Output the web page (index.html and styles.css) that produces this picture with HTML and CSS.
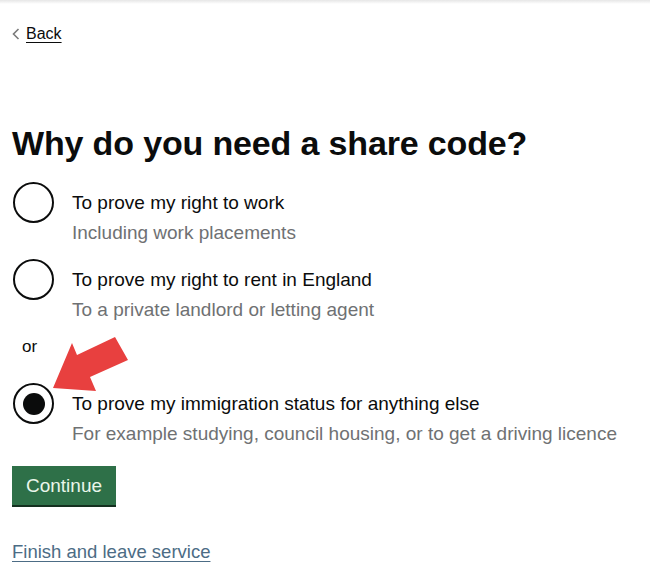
FILE: index.html
```html
<!DOCTYPE html>
<html lang="en">
<head>
<meta charset="utf-8">
<title>Why do you need a share code?</title>
<link rel="stylesheet" href="styles.css">
</head>
<body>
<div class="topline"></div>
<main class="page">
  <a class="back" href="#"><svg class="chev" width="8" height="12" viewBox="0 0 8 12"><polyline points="6.5,1 1.5,6 6.5,11" fill="none" stroke="#7a7a7a" stroke-width="1.6"/></svg><span class="back-text">Back</span></a>
  <h1 class="title">Why do you need a share code?</h1>
  <div class="radios">
    <div class="item">
      <span class="radio"></span>
      <div class="text">
        <div class="label">To prove my right to work</div>
        <div class="hint">Including work placements</div>
      </div>
    </div>
    <div class="item">
      <span class="radio"></span>
      <div class="text">
        <div class="label">To prove my right to rent in England</div>
        <div class="hint">To a private landlord or letting agent</div>
      </div>
    </div>
    <div class="or">or</div>
    <div class="item">
      <span class="radio checked"></span>
      <div class="text">
        <div class="label">To prove my immigration status for anything else</div>
        <div class="hint">For example studying, council housing, or to get a driving licence</div>
      </div>
    </div>
  </div>
  <button class="btn" type="button">Continue</button>
  <a class="finish" href="#">Finish and leave service</a>
  <svg class="arrow" width="90" height="70" viewBox="0 0 90 70">
    <polygon points="3,54 22,9 27,21 65,3 78,26 40,43 46,57" fill="#e8403f"/>
  </svg>
</main>
</body>
</html>
```
FILE: styles.css
```css
html, body {
  margin: 0;
  padding: 0;
  background: #ffffff;
}
body {
  font-family: "Liberation Sans", Arial, sans-serif;
  color: #0b0c0c;
  width: 650px;
  height: 580px;
  overflow: hidden;
}
.topline {
  height: 4px;
  background: linear-gradient(#e6e6e6, #ffffff);
}
.page {
  position: relative;
  padding: 0 0 0 12px;
  display: flex;
  flex-direction: column;
  align-items: flex-start;
}
.back {
  margin-top: 20px;
  display: flex;
  align-items: center;
  gap: 6px;
  color: #0b0c0c;
  text-decoration: none;
  font-size: 16px;
  line-height: 20px;
}
.chev {
  display: block;
  margin-top: -1px;
}
.back-text {
  text-decoration: underline;
  text-underline-offset: 3px;
  text-decoration-thickness: 1px;
}
.title {
  margin: 79px 0 0 0;
  font-size: 34px;
  line-height: 40px;
  font-weight: bold;
  letter-spacing: -0.15px;
}
.radios {
  margin-top: 19px;
  display: flex;
  flex-direction: column;
}
.item {
  display: flex;
  align-items: flex-start;
  gap: 18px;
}
.item + .item {
  margin-top: 15px;
}
.radio {
  box-sizing: border-box;
  width: 41px;
  height: 41px;
  border: 2.5px solid #0b0c0c;
  border-radius: 50%;
  margin-left: 1px;
  display: flex;
  align-items: center;
  justify-content: center;
  flex: none;
}
.radio.checked::after {
  content: "";
  width: 22px;
  height: 22px;
  border-radius: 50%;
  background: #0b0c0c;
}
.text {
  padding-top: 10px;
}
.label {
  font-size: 19px;
  line-height: 22px;
  color: #0b0c0c;
}
.hint {
  margin-top: 8px;
  font-size: 19px;
  line-height: 22px;
  color: #6f7173;
}
.or {
  font-size: 17px;
  line-height: 22px;
  margin: 15px 0 25px 10px;
}
.btn {
  margin-top: 21px;
  background: #2e7048;
  color: #e9f6ea;
  border: none;
  border-radius: 0;
  box-shadow: 0 2px 0 #14301f;
  font-family: "Liberation Sans", Arial, sans-serif;
  font-size: 19px;
  line-height: 22px;
  height: 39px;
  padding: 0 13px;
  width: 104px;
  cursor: pointer;
}
.finish {
  margin-top: 36px;
  font-size: 18.5px;
  line-height: 22px;
  color: #4c6c85;
  text-decoration: underline;
  text-underline-offset: 3px;
}
.arrow {
  position: absolute;
  left: 50px;
  top: 330px;
}
```
